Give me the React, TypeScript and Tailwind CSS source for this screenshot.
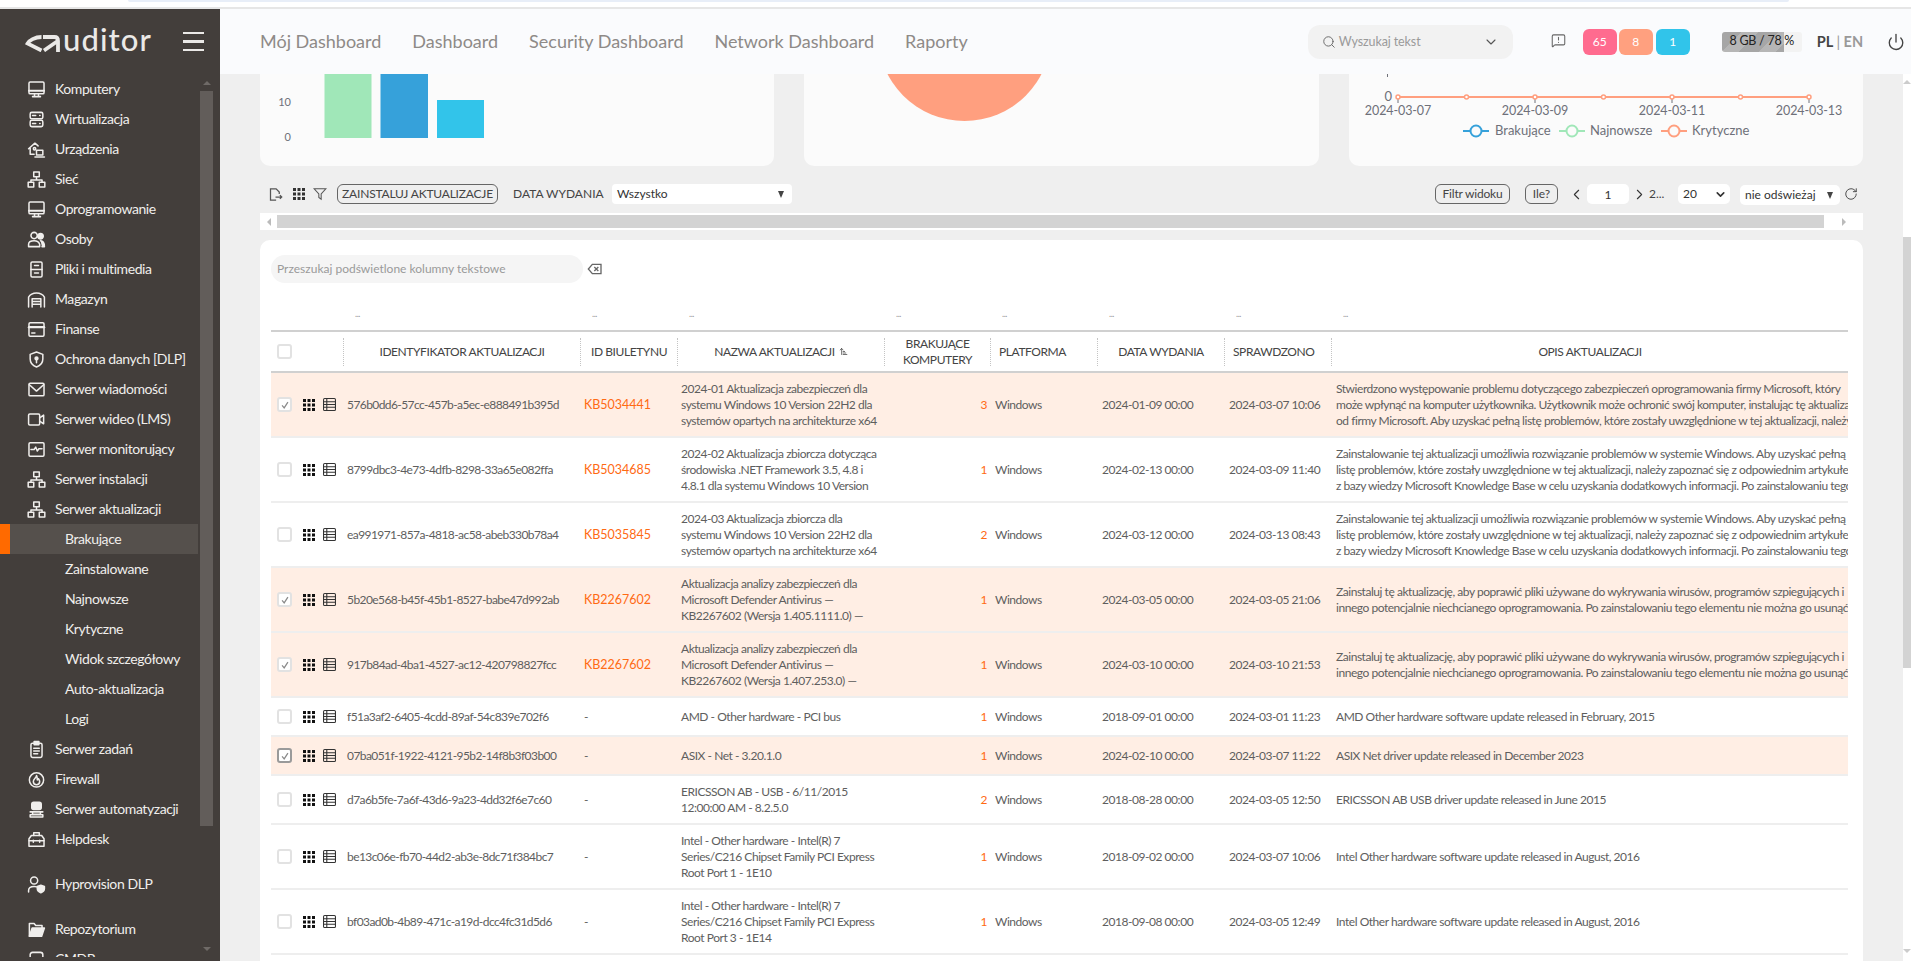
import React from "react";
import { Search, ChevronDown, ChevronLeft, ChevronRight, Power, RotateCw, MessageSquareWarning, ArrowUpNarrowWide } from "lucide-react";

const Ico = ({ children }: { children: React.ReactNode }) => (
  <svg viewBox="0 0 24 24" className="w-[19px] h-[19px] shrink-0" fill="none" stroke="currentColor" strokeWidth="1.9" strokeLinejoin="round" strokeLinecap="round">{children}</svg>
);

const icons: Record<string, React.ReactNode> = {
  desktop: <><rect x="2.5" y="2.5" width="19" height="15" rx="1.5" /><path d="M2.5 13.5h19" strokeWidth="2.6" /><path d="M9.5 17.5v3M14.5 17.5v3M7 21h10" /></>,
  server: <><rect x="4" y="3" width="16" height="8" rx="2" /><rect x="4" y="13" width="16" height="8" rx="2" /><path d="M16 7h.5M16 17h.5M7 7h4M7 17h4" /></>,
  devices: <><path d="M2 11l8-7 4 3.5M4 10v8h5" /><circle cx="9.5" cy="11" r="1.5" /><rect x="12" y="13" width="8" height="6" /><path d="M10 21.5h12" /></>,
  network: <><rect x="8.5" y="2.5" width="7" height="6" /><rect x="1.5" y="15.5" width="7" height="6" /><rect x="15.5" y="15.5" width="7" height="6" /><path d="M12 8.5v4M5 15.5v-3h14v3" /></>,
  people: <><circle cx="9" cy="7" r="4" /><path d="M2 21v-3c0-3 3-4.500 7-4.500s6 1.500 7 4.500v3z" /><circle cx="17" cy="8" r="3.500" fill="currentColor" /><path d="M17 13.500c3 0 5 2 5 7.500h-3" fill="currentColor" /></>,
  files: <><rect x="5" y="2.500" width="14" height="19" rx="1.500" /><path d="M5 12h14M9.500 7h5M9.500 16.500h5" /></>,
  warehouse: <><path d="M2 21.500V9c4-7 16-7 20 0v12.500" /><path d="M6.500 21.500V11h11v10.500M6.500 14.500h11M6.500 18h11" /></>,
  card: <><rect x="2.500" y="3.500" width="19" height="17" rx="1.500" /><path d="M2.500 9h19" strokeWidth="3" /><path d="M6 16.500h4" /></>,
  shield: <><path d="M12 2.500l8 3v6c0 5-3.500 8.500-8 10-4.500-1.500-8-5-8-10v-6z" /><circle cx="12" cy="10.500" r="1.800" fill="currentColor" /><path d="M12 12v4" /></>,
  mail: <><rect x="2.500" y="4" width="19" height="16" rx="1.500" /><path d="M3 6l9 8 9-8" /></>,
  video: <><rect x="2" y="5" width="14" height="14" rx="1.500" /><path d="M16 10l5-3.500v11L16 14" /></>,
  monitor: <><rect x="2.500" y="3.500" width="19" height="17" rx="1.500" /><path d="M5 12h4l2-3 2 5 2-3h4" /></>,
  tasks: <><rect x="5" y="4" width="14" height="18" rx="2" /><rect x="9" y="2" width="6" height="4" fill="currentColor" /><path d="M8.500 10.500h7M8.500 14h7M8.500 17.500h5" /></>,
  fire: <><circle cx="12" cy="12.500" r="9" /><path d="M12 7c0 3-4 4-4 7.500a4 4 0 008 0c0-1.500-1-2.500-1.500-3.500-.5 1-1 1.500-1.500 1.500 0-2 0-4-1-5.500z" /></>,
  robot: <><rect x="6" y="3" width="12" height="9" rx="2.500" fill="currentColor" /><path d="M4 15h16M7 15v3h10v-3M4 21.500h16v-3H4z" /></>,
  toolbox: <><path d="M8.500 7V3.500h7V7" /><path d="M2.500 11l3-4h13l3 4v9.500h-19z" /><path d="M2.500 13.500h19M8 13v2.500M16 13v2.500" /></>,
  usershield: <><circle cx="9" cy="7" r="4.500" /><path d="M2 21.500v-2c0-3.500 3-5 7-5 1.500 0 2.500.2 3.500.5" /><path d="M17.500 13l4.500 1.500v3c0 2.500-2 4-4.500 5-2.500-1-4.500-2.500-4.500-5v-3z" fill="currentColor" /></>,
  folder: <><path d="M3 20.500V4.500h6l2 2.500h8v3" /><path d="M3 20.500l3.500-10.500H22l-3.500 10.500z" fill="currentColor" /></>,
  cmdb: <><rect x="4" y="3" width="16" height="18" rx="3" /></>,
};

type NavItem = { t: string; i?: string; active?: boolean; mt?: boolean };
const nav: NavItem[] = [
  { t: "Komputery", i: "desktop" }, { t: "Wirtualizacja", i: "server" }, { t: "Urządzenia", i: "devices" }, { t: "Sieć", i: "network" },
  { t: "Oprogramowanie", i: "desktop" }, { t: "Osoby", i: "people" }, { t: "Pliki i multimedia", i: "files" }, { t: "Magazyn", i: "warehouse" },
  { t: "Finanse", i: "card" }, { t: "Ochrona danych [DLP]", i: "shield" }, { t: "Serwer wiadomości", i: "mail" }, { t: "Serwer wideo (LMS)", i: "video" },
  { t: "Serwer monitorujący", i: "monitor" }, { t: "Serwer instalacji", i: "network" }, { t: "Serwer aktualizacji", i: "network" },
  { t: "Brakujące", active: true }, { t: "Zainstalowane" }, { t: "Najnowsze" }, { t: "Krytyczne" }, { t: "Widok szczegółowy" }, { t: "Auto-aktualizacja" }, { t: "Logi" },
  { t: "Serwer zadań", i: "tasks" }, { t: "Firewall", i: "fire" }, { t: "Serwer automatyzacji", i: "robot" }, { t: "Helpdesk", i: "toolbox" },
  { t: "Hyprovision DLP", i: "usershield", mt: true }, { t: "Repozytorium", i: "folder", mt: true }, { t: "CMDB", i: "cmdb" },
];

const Sidebar = () => (
  <aside className="w-[220px] h-[952px] bg-[#433e3b] shrink-0 flex flex-col overflow-hidden">
    <div className="h-[65px] shrink-0 flex items-center pl-[25px] text-[#ebe9e7]">
      <svg viewBox="0 0 35 17" className="w-[35px] h-[17px] mt-[3px] shrink-0" fill="none" stroke="currentColor" strokeWidth="3.800">
        <path d="M16.500 2C10 2 4 5.500 2.500 8.500L16.500 15.500" />
        <path d="M18 2H29.500c2.500 0 3.500 1.500 3.500 4V17" />
        <path d="M32 6.500L19 15.500" />
      </svg>
      <span className="text-[31px] leading-none font-medium tracking-[1.1px] ml-[3px] -mt-[5px]">uditor</span>
      <div className="ml-auto mr-[16px] w-[21px] flex flex-col gap-[6px]">
        <div className="h-[2.500px] bg-[#ebe9e7]" /><div className="h-[2.500px] bg-[#ebe9e7]" /><div className="h-[2.500px] bg-[#ebe9e7]" />
      </div>
    </div>
    <div className="flex h-[883px]">
      <nav className="w-[198px] overflow-hidden text-[14px] tracking-[-0.42px] text-[#f0eeec]">
        {nav.map((n) => (
          <div key={n.t} className={`h-[30px] flex items-center ${n.mt ? "mt-[15px]" : ""} ${n.active ? "bg-[#55504c] border-l-[10px] border-[#ff6a00] pl-[55px]" : n.i ? "pl-[27px] gap-[9px]" : "pl-[65px]"}`}>
            {n.i && <Ico>{icons[n.i]}</Ico>}
            <span className="whitespace-nowrap -mt-[1px]">{n.t}</span>
          </div>
        ))}
      </nav>
      <div className="ml-[2px] w-[13px] flex flex-col items-center">
        <div className="h-[17px] flex items-center justify-center shrink-0"><div className="w-0 h-0 border-x-[4px] border-x-transparent border-b-[4px] border-b-[#6f6a67]" /></div>
        <div className="w-[13px] h-[735px] bg-[#625d5a] shrink-0" />
        <div className="flex-1 flex items-end justify-center pb-[6px]"><div className="w-0 h-0 border-x-[4px] border-x-transparent border-t-[4px] border-t-[#6f6a67]" /></div>
      </div>
    </div>
  </aside>
);

const Header = () => (
  <header className="h-[65px] bg-[#fafbfd] shrink-0 flex items-center pl-[40px] relative">
    <div className="flex gap-[31px] text-[18px] text-[#8e8a87] whitespace-nowrap">
      <span>Mój Dashboard</span><span>Dashboard</span><span>Security Dashboard</span><span>Network Dashboard</span><span>Raporty</span>
    </div>
    <div className="ml-[340px] w-[205px] h-[34px] rounded-[12px] bg-[#f2f2f2] flex items-center pl-[14px] pr-[14px] text-[12.500px] tracking-[-0.1px] text-[#9a9a9a] shrink-0">
      <Search size={14} className="text-[#666]" strokeWidth={1.6} />
      <span className="ml-[3px] mt-[1px]">Wyszukaj tekst</span>
      <ChevronDown size={16} className="ml-auto text-[#555]" strokeWidth={1.6} />
    </div>
    <MessageSquareWarning size={15} className="ml-[38px] -mt-[3px] text-[#666] shrink-0" strokeWidth={1.7} />
    <div className="ml-[17px] flex gap-[2px] text-[12px] text-white shrink-0">
      <div className="w-[34px] h-[26px] rounded-[6px] bg-[#ff6b8f] flex items-center justify-center">65</div>
      <div className="w-[34px] h-[26px] rounded-[6px] bg-[#ffa07f] flex items-center justify-center">8</div>
      <div className="w-[34px] h-[26px] rounded-[6px] bg-[#31c4ea] flex items-center justify-center ml-[1px]">1</div>
    </div>
    <div className="ml-[32px] w-[80px] h-[20px] rounded-[3px] bg-[#f3f3f3] relative overflow-hidden text-[12.500px] tracking-[-0.25px] text-[#222] shrink-0">
      <div className="absolute inset-y-0 left-0 w-[62px] bg-[repeating-linear-gradient(135deg,#a6a6a6_0,#a6a6a6_14px,#b6b6b6_14px,#b6b6b6_26px)]" />
      <div className="absolute inset-0 flex items-center justify-center whitespace-nowrap">8 GB / 78 %</div>
    </div>
    <div className="ml-[15px] w-[46px] text-[14.500px] font-bold whitespace-nowrap text-[#444] shrink-0">PL <span className="font-normal text-[#999]">|</span> <span className="text-[#999]">EN</span></div>
    <Power size={18} className="ml-[24px] text-[#444] shrink-0" strokeWidth={1.8} />
  </header>
);

const axis = "#6e7079";
const Charts = () => (
  <div className="flex gap-[30px] h-[92px] shrink-0">
    <div className="w-[514px] bg-[#fbfbfb] rounded-b-[10px] overflow-hidden">
      <svg width="514" height="92" fontSize="11" fill={axis} fontFamily="Lato, sans-serif">
        <text x="31" y="32" textAnchor="end">10</text>
        <text x="31" y="67" textAnchor="end">0</text>
        <rect x="64.500" y="0" width="47" height="64" fill="#a0e7b8" />
        <rect x="120.500" y="0" width="47.500" height="64" fill="#36a1da" />
        <rect x="177" y="26" width="47" height="38" fill="#32c4ea" />
      </svg>
    </div>
    <div className="w-[515px] bg-[#fbfbfb] rounded-b-[10px] overflow-hidden">
      <svg width="515" height="92"><circle cx="160.500" cy="-39.600" r="86.600" fill="#ff9f7f" /></svg>
    </div>
    <div className="w-[514px] bg-[#fbfbfb] rounded-b-[10px] overflow-hidden">
      <svg width="514" height="92" fontSize="12.500" fill={axis} fontFamily="Lato, sans-serif">
        <path d="M38.500 0v3" stroke={axis} />
        <text x="43" y="27" fontSize="13" textAnchor="end">0</text>
        {[49, 186, 323, 460].map((x) => <path key={x} d={`M${x} 24v5`} stroke={axis} />)}
        <path d="M49 23H460" stroke="#ff9f7f" strokeWidth="2" />
        {[49, 117.500, 186, 254.500, 323, 391.500, 460].map((x) => <circle key={x} cx={x} cy="23" r="2" fill="#fff" stroke="#ff9f7f" strokeWidth="1.500" />)}
        {["2024-03-07", "2024-03-09", "2024-03-11", "2024-03-13"].map((t, i) => <text key={t} x={49 + i * 137} y="41" textAnchor="middle" letterSpacing="-0.1">{t}</text>)}
        {[[127, "#36a1da", "Brakujące", 146], [223, "#a0e7b8", "Najnowsze", 241], [325, "#ff9f7f", "Krytyczne", 343]].map(([x, c, t, tx]) => (
          <g key={t as string}>
            <path d={`M${(x as number) - 13} 57h26`} stroke={c as string} strokeWidth="2" />
            <circle cx={x as number} cy="57" r="5.500" fill="#fbfbfb" stroke={c as string} strokeWidth="2" />
            <text x={tx as number} y="61" fontSize="13">{t as string}</text>
          </g>
        ))}
      </svg>
    </div>
  </div>
);

const Dots = ({ className = "" }: { className?: string }) => (
  <svg viewBox="0 0 12 12" className={`w-[12px] h-[12px] shrink-0 ${className}`} fill="currentColor">
    {[0, 4.500, 9].flatMap((y) => [0, 4.500, 9].map((x) => <rect key={`${x}-${y}`} x={x} y={y} width="3" height="3" />))}
  </svg>
);

const Caret = () => <div className="w-0 h-0 border-x-[3.500px] border-x-transparent border-t-[7px] border-t-[#444]" />;

const Toolbar = () => (
  <div className="h-[20px] mt-[18px] shrink-0 flex items-center text-[12px] text-[#444] whitespace-nowrap relative">
    <svg viewBox="0 0 24 24" className="w-[15px] h-[15px] ml-[8px] text-[#555] shrink-0" fill="none" stroke="currentColor" strokeWidth="2">
      <path d="M13 21H4V3h9l5 5v3M12 16h10M19 13l3 3-3 3" />
    </svg>
    <Dots className="ml-[10px] text-[#333]" />
    <svg viewBox="0 0 24 24" className="w-[14px] h-[14px] ml-[8px] text-[#555] shrink-0" fill="none" stroke="currentColor" strokeWidth="1.800">
      <path d="M2 3h20l-8 9v9l-4-3v-6z" />
    </svg>
    <div className="ml-[10px] w-[161px] h-[20px] rounded-[6px] border border-[#666] flex items-center justify-center tracking-[-0.2px] shrink-0">ZAINSTALUJ AKTUALIZACJE</div>
    <div className="ml-[15px] w-[92px] shrink-0">DATA WYDANIA</div>
    <div className="ml-[7px] w-[180px] h-[20px] rounded-[4px] bg-white flex items-center px-[5px] text-[#333] shrink-0">Wszystko<span className="ml-auto mr-[3px]"><Caret /></span></div>
    <div className="ml-[643px] w-[75px] h-[20px] rounded-[6px] border border-[#666] flex items-center justify-center tracking-[-0.2px] shrink-0">Filtr widoku</div>
    <div className="ml-[15px] w-[33px] h-[20px] rounded-[6px] border border-[#666] flex items-center justify-center shrink-0">Ile?</div>
    <ChevronLeft size={17} className="ml-[10px] text-[#333] shrink-0" strokeWidth={1.5} />
    <div className="ml-[2px] w-[42px] h-[20px] rounded-[5px] bg-white flex items-center justify-center text-[#333] shrink-0"><span className="mt-[2px]">1</span></div>
    <ChevronRight size={17} className="ml-[2px] text-[#333] shrink-0" strokeWidth={1.5} />
    <span className="ml-[1px] w-[20px] shrink-0">2...</span>
    <div className="ml-[9px] w-[52px] h-[20px] rounded-[5px] bg-white flex items-center pl-[5px] pr-[3px] text-[#333] shrink-0">20<ChevronDown size={13} className="ml-auto" strokeWidth={3} /></div>
    <div className="ml-[10px] w-[100px] h-[20px] mt-[1px] rounded-[5px] bg-white flex items-center pl-[5px] pr-[7px] text-[#333] shrink-0">nie odświeżaj<span className="ml-auto mt-[2px]"><Caret /></span></div>
    <RotateCw size={14} className="ml-[4px] text-[#444] shrink-0" strokeWidth={1.6} />
  </div>
);

const HScroll = () => (
  <div className="h-[17px] mt-[9px] bg-white shrink-0 flex items-center">
    <div className="w-[17px] flex justify-center shrink-0"><div className="w-0 h-0 border-y-[4px] border-y-transparent border-r-[4px] border-r-[#bbb]" /></div>
    <div className="w-[1547px] h-[13px] bg-[#d3d3d3] shrink-0" />
    <div className="flex-1 flex justify-center"><div className="w-0 h-0 border-y-[4px] border-y-transparent border-l-[4px] border-l-[#bbb]" /></div>
  </div>
);

type Row = { id: string; kb: string; name: string[]; n: number; date: string; chk: string; opis: string[]; sel?: boolean; dark?: boolean; h: string };
const winH = "h-[65px]";
const opisZ = [
  "Zainstalowanie tej aktualizacji umożliwia rozwiązanie problemów w systemie Windows. Aby uzyskać pełną",
  "listę problemów, które zostały uwzględnione w tej aktualizacji, należy zapoznać się z odpowiednim artykułem",
  "z bazy wiedzy Microsoft Knowledge Base w celu uzyskania dodatkowych informacji. Po zainstalowaniu tego elementu",
];
const opisD = [
  "Zainstaluj tę aktualizację, aby poprawić pliki używane do wykrywania wirusów, programów szpiegujących i",
  "innego potencjalnie niechcianego oprogramowania. Po zainstalowaniu tego elementu nie można go usunąć.",
];
const rows: Row[] = [
  { id: "576b0dd6-57cc-457b-a5ec-e888491b395d", kb: "KB5034441", name: ["2024-01 Aktualizacja zabezpieczeń dla", "systemu Windows 10 Version 22H2 dla", "systemów opartych na architekturze x64"], n: 3, date: "2024-01-09 00:00", chk: "2024-03-07 10:06", sel: true, h: winH,
    opis: ["Stwierdzono występowanie problemu dotyczącego zabezpieczeń oprogramowania firmy Microsoft, który", "może wpłynąć na komputer użytkownika. Użytkownik może ochronić swój komputer, instalując tę aktualizację", "od firmy Microsoft. Aby uzyskać pełną listę problemów, które zostały uwzględnione w tej aktualizacji, należy"] },
  { id: "8799dbc3-4e73-4dfb-8298-33a65e082ffa", kb: "KB5034685", name: ["2024-02 Aktualizacja zbiorcza dotycząca", "środowiska .NET Framework 3.5, 4.8 i", "4.8.1 dla systemu Windows 10 Version"], n: 1, date: "2024-02-13 00:00", chk: "2024-03-09 11:40", h: winH, opis: opisZ },
  { id: "ea991971-857a-4818-ac58-abeb330b78a4", kb: "KB5035845", name: ["2024-03 Aktualizacja zbiorcza dla", "systemu Windows 10 Version 22H2 dla", "systemów opartych na architekturze x64"], n: 2, date: "2024-03-12 00:00", chk: "2024-03-13 08:43", h: winH, opis: opisZ },
  { id: "5b20e568-b45f-45b1-8527-babe47d992ab", kb: "KB2267602", name: ["Aktualizacja analizy zabezpieczeń dla", "Microsoft Defender Antivirus —", "KB2267602 (Wersja 1.405.1111.0) —"], n: 1, date: "2024-03-05 00:00", chk: "2024-03-05 21:06", sel: true, h: winH, opis: opisD },
  { id: "917b84ad-4ba1-4527-ac12-420798827fcc", kb: "KB2267602", name: ["Aktualizacja analizy zabezpieczeń dla", "Microsoft Defender Antivirus —", "KB2267602 (Wersja 1.407.253.0) —"], n: 1, date: "2024-03-10 00:00", chk: "2024-03-10 21:53", sel: true, h: winH, opis: opisD },
  { id: "f51a3af2-6405-4cdd-89af-54c839e702f6", kb: "-", name: ["AMD - Other hardware - PCI bus"], n: 1, date: "2018-09-01 00:00", chk: "2024-03-01 11:23", h: "h-[39px]", opis: ["AMD Other hardware software update released in February, 2015"] },
  { id: "07ba051f-1922-4121-95b2-14f8b3f03b00", kb: "-", name: ["ASIX - Net - 3.20.1.0"], n: 1, date: "2024-02-10 00:00", chk: "2024-03-07 11:22", sel: true, dark: true, h: "h-[39px]", opis: ["ASIX Net driver update released in December 2023"] },
  { id: "d7a6b5fe-7a6f-43d6-9a23-4dd32f6e7c60", kb: "-", name: ["ERICSSON AB - USB - 6/11/2015", "12:00:00 AM - 8.2.5.0"], n: 2, date: "2018-08-28 00:00", chk: "2024-03-05 12:50", h: "h-[49px]", opis: ["ERICSSON AB USB driver update released in June 2015"] },
  { id: "be13c06e-fb70-44d2-ab3e-8dc71f384bc7", kb: "-", name: ["Intel - Other hardware - Intel(R) 7", "Series/C216 Chipset Family PCI Express", "Root Port 1 - 1E10"], n: 1, date: "2018-09-02 00:00", chk: "2024-03-07 10:06", h: winH, opis: ["Intel Other hardware software update released in August, 2016"] },
  { id: "bf03ad0b-4b89-471c-a19d-dcc4fc31d5d6", kb: "-", name: ["Intel - Other hardware - Intel(R) 7", "Series/C216 Chipset Family PCI Express", "Root Port 3 - 1E14"], n: 1, date: "2018-09-08 00:00", chk: "2024-03-05 12:49", h: winH, opis: ["Intel Other hardware software update released in August, 2016"] },
];

const widths = ["w-[72px]", "w-[237px]", "w-[97px]", "w-[207px]", "w-[106px]", "w-[107px]", "w-[127px]", "w-[107px]", "w-[517px]"];

const Box = ({ on, dark }: { on?: boolean; dark?: boolean }) => (
  <div className={`w-[15px] h-[15px] rounded-[3px] bg-white border-2 flex items-center justify-center shrink-0 ${dark ? "border-[#9a9a9a]" : "border-[#e2e2e2]"}`}>
    {on && <svg viewBox="0 0 12 12" className="w-[10px] h-[10px]" fill="none" stroke="#8a8a8a" strokeWidth="1.500"><path d="M2.500 6.500L5 9.500 9.500 2.500" /></svg>}
  </div>
);

const Th = ({ children, first, left }: { children?: React.ReactNode; first?: boolean; left?: boolean }) => (
  <th className="p-0 font-normal align-middle">
    <div className={`h-[28px] flex items-center ${first ? "pl-[6px]" : "border-l border-dotted border-[#c4c4c4]"} ${left ? "pl-[8px]" : first ? "" : "justify-center text-center"}`}>{children}</div>
  </th>
);

const TableCard = () => (
  <div className="mt-[10px] flex-1 bg-white rounded-t-[10px] pl-[11px] pr-[15px] overflow-hidden">
    <div className="h-[43px] pt-[15px] flex items-start">
      <div className="w-[312px] h-[28px] rounded-[14px] bg-[#f5f5f5] flex items-center pl-[6px] text-[12px] text-[#9a9a9a] shrink-0">Przeszukaj podświetlone kolumny tekstowe</div>
      <svg viewBox="0 0 24 24" className="w-[16px] h-[16px] ml-[4px] mt-[6px] text-[#666] shrink-0" fill="none" stroke="currentColor" strokeWidth="2">
        <path d="M8 5h13v14H8l-6-7z" /><path d="M11 9l6 6M17 9l-6 6" />
      </svg>
    </div>
    <table className="table-fixed w-[1577px] border-collapse text-[12px] tracking-[-0.46px] leading-[16px] text-[#5e5e5e] whitespace-nowrap">
      <colgroup>{widths.map((w, i) => <col key={i} className={w} />)}</colgroup>
      <thead>
        <tr className="h-[48px]">
          <td />
          {widths.slice(1).map((w, i) => <td key={i} className="pl-[12px] align-bottom pb-[12px] text-[9px] leading-[8px] text-[#999]">...</td>)}
        </tr>
        <tr className="h-[41px] border-y-2 border-[#d0d0d0] text-[#444] tracking-[-0.42px]">
          <Th first><Box /></Th>
          <Th>IDENTYFIKATOR AKTUALIZACJI</Th>
          <Th>ID BIULETYNU</Th>
          <Th><span className="flex items-center">NAZWA AKTUALIZACJI<ArrowUpNarrowWide size={9} className="ml-[4px]" /></span></Th>
          <Th>BRAKUJĄCE<br />KOMPUTERY</Th>
          <Th left>PLATFORMA</Th>
          <Th>DATA WYDANIA</Th>
          <Th left>SPRAWDZONO</Th>
          <Th>OPIS AKTUALIZACJI</Th>
        </tr>
      </thead>
      <tbody>
        {rows.map((r) => (
          <tr key={r.id} className={`${r.h} border-b-2 border-[#eeeeee] ${r.sel ? "bg-[#ffeee4]" : ""}`}>
            <td className="p-0 pl-[6px]">
              <div className="flex items-center"><Box on={r.sel} dark={r.dark} /><Dots className="ml-[11px] text-[#111]" />
                <svg viewBox="0 0 12 12" className="w-[13px] h-[13px] ml-[8px] text-[#333]" fill="none" stroke="currentColor" strokeWidth="1"><rect x="0.500" y="0.500" width="11" height="11" rx="1" /><path d="M3.500 .5v11M.5 3.500h11M.5 6h11M.5 8.500h11" /></svg>
              </div>
            </td>
            <td className="p-0 pl-[4px] tracking-[-0.58px]">{r.id}</td>
            <td className={`p-0 pl-[4px] ${r.kb !== "-" ? "text-[#ff6a13] text-[12.500px] tracking-[0px]" : ""}`}>{r.kb}</td>
            <td className="p-0 pl-[4px]">{r.name.map((l) => <div key={l}>{l}</div>)}</td>
            <td className="p-0 pr-[3px] text-right text-[#ff6a13]">{r.n}</td>
            <td className="p-0 pl-[5px]">Windows</td>
            <td className="p-0 pl-[5px]">{r.date}</td>
            <td className="p-0 pl-[5px]">{r.chk}</td>
            <td className="p-0 pl-[5px] overflow-hidden">{r.opis.map((l) => <div key={l}>{l}</div>)}</td>
          </tr>
        ))}
      </tbody>
    </table>
  </div>
);

export default function App() {
  return (
    <div className="w-[1911px] h-[961px] overflow-hidden bg-white font-[family-name:Lato,sans-serif] flex flex-col">
      <div className="h-[9px] shrink-0 border-b-2 border-[#e6e6e6] pl-[128px]">
        <div className="w-[1661px] h-[2px] bg-[#e8eef8] rounded-b-[4px]" />
      </div>
      <div className="flex flex-1 min-h-0">
        <Sidebar />
        <div className="flex-1 flex flex-col min-w-0">
          <Header />
          <div className="flex flex-1 min-h-0">
            <main className="w-[1683px] bg-[#efefef] px-[40px] flex flex-col overflow-hidden">
              <Charts />
              <Toolbar />
              <HScroll />
              <TableCard />
            </main>
            <div className="flex-1 bg-white flex flex-col items-center">
              <div className="h-[163px] shrink-0 flex justify-center pt-[6px]"><div className="w-0 h-0 border-x-[4px] border-x-transparent border-b-[4px] border-b-[#ccc]" /></div>
              <div className="w-full h-[431px] bg-[#d3d3d3] shrink-0" />
              <div className="flex-1 flex items-end pb-[8px]"><div className="w-0 h-0 border-x-[4px] border-x-transparent border-t-[4px] border-t-[#ccc]" /></div>
            </div>
          </div>
        </div>
      </div>
    </div>
  );
}
